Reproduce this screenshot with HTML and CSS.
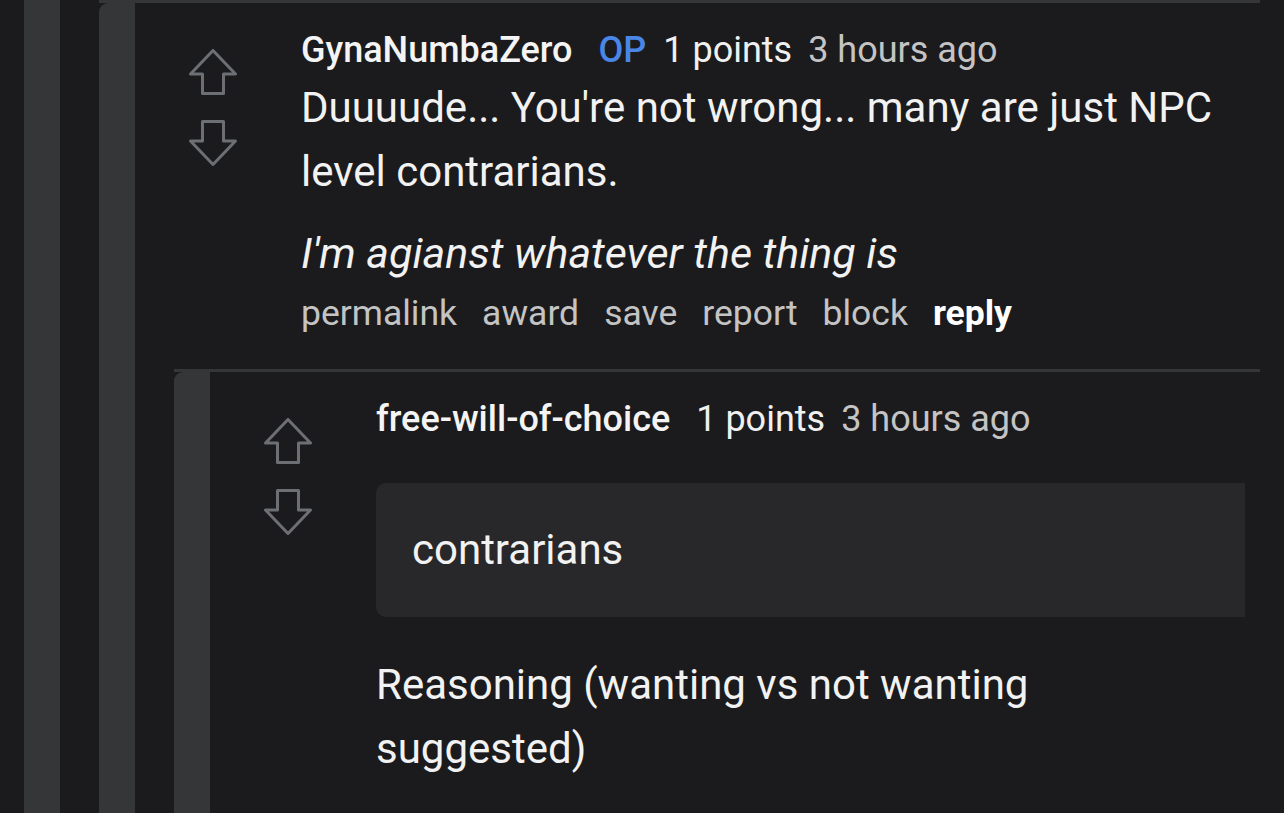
FILE: index.html
```html
<!DOCTYPE html>
<html>
<head>
<meta charset="utf-8">
<link rel="stylesheet" href="styles.css">
</head>
<body>
<div class="page">
  <div class="thread">
    <div class="bar bar-root"></div>
    <div class="replies">
      <div class="comment">
        <div class="bar"></div>
        <div class="main">
          <div class="entry">
            <div class="votes">
              <svg class="arrow" viewBox="0 0 48 46"><polygon points="24,1.5 46.5,25 34.5,25 34.5,44.5 13.5,44.5 13.5,25 1.5,25"/></svg>
              <svg class="arrow" viewBox="0 0 48 46"><polygon points="13.5,1.5 34.5,1.5 34.5,21 46.5,21 24,44.5 1.5,21 13.5,21"/></svg>
            </div>
            <div class="content">
              <div class="meta">
                <span class="author">GynaNumbaZero</span>
                <span class="op">OP</span>
                <span class="score">1 points</span>
                <span class="time">3 hours ago</span>
              </div>
              <p class="text">Duuuude... You're not wrong... many are just NPC level contrarians.</p>
              <p class="text text-gap"><em>I'm agianst whatever the thing is</em></p>
              <div class="actions">
                <span>permalink</span>
                <span>award</span>
                <span>save</span>
                <span>report</span>
                <span>block</span>
                <span class="reply">reply</span>
              </div>
            </div>
          </div>
          <div class="child">
            <div class="comment">
              <div class="bar"></div>
              <div class="main">
                <div class="entry">
                  <div class="votes">
                    <svg class="arrow" viewBox="0 0 48 46"><polygon points="24,1.5 46.5,25 34.5,25 34.5,44.5 13.5,44.5 13.5,25 1.5,25"/></svg>
                    <svg class="arrow" viewBox="0 0 48 46"><polygon points="13.5,1.5 34.5,1.5 34.5,21 46.5,21 24,44.5 1.5,21 13.5,21"/></svg>
                  </div>
                  <div class="content">
                    <div class="meta">
                      <span class="author">free-will-of-choice</span>
                      <span class="score">1 points</span>
                      <span class="time">3 hours ago</span>
                    </div>
                    <blockquote class="quote">contrarians</blockquote>
                    <p class="text text-after-quote">Reasoning (wanting vs not wanting suggested)</p>
                  </div>
                </div>
              </div>
            </div>
          </div>
        </div>
      </div>
    </div>
  </div>
</div>
</body>
</html>
```
FILE: styles.css
```css
html, body {
  margin: 0;
  padding: 0;
  height: 100%;
  overflow: hidden;
  background: #1b1b1d;
}

body {
  font-family: Roboto, "Liberation Sans", sans-serif;
  color: #f2f2f2;
}

.page {
  padding: 0 24px;
  min-height: 100%;
  display: flex;
  flex-direction: column;
}

.thread {
  display: flex;
  flex: 1;
}

.bar {
  width: 36px;
  flex: 0 0 36px;
  background: #353638;
  border-top-left-radius: 9px;
}

.bar-root {
  border-radius: 0;
}

.replies {
  flex: 1;
  padding-left: 39px;
  display: flex;
  flex-direction: column;
}

.comment {
  display: flex;
  border-top: 3px solid #353638;
  flex: 1;
}

.main {
  flex: 1;
  display: flex;
  flex-direction: column;
  min-width: 0;
}

.entry {
  display: flex;
  padding-right: 15px;
  padding-bottom: 32px;
}

.votes {
  flex: 0 0 48px;
  margin-left: 54px;
  margin-right: 64px;
  padding-top: 46px;
  display: flex;
  flex-direction: column;
  gap: 25px;
}

.arrow {
  width: 48px;
  height: 46px;
  display: block;
}

.arrow polygon {
  fill: none;
  stroke: #6c6f73;
  stroke-width: 3;
  stroke-linejoin: round;
}

.content {
  flex: 1;
  min-width: 0;
  overflow: hidden;
}

.meta {
  padding-top: 23px;
  display: flex;
  align-items: center;
  height: 48px;
  line-height: 48px;
  font-size: 36px;
  white-space: nowrap;
}

.author {
  font-weight: 500;
  color: #f4f4f4;
  margin-right: 26px;
}

.op {
  color: #4a86e8;
  font-weight: 500;
  margin-right: 17px;
}

.score {
  color: #f0f0f0;
  margin-right: 16px;
}

.time {
  color: #c4c4c4;
}

.text {
  margin: 2px 24px 0 0;
  font-size: 42px;
  line-height: 64px;
}

.text-gap {
  margin-top: 17px;
  font-size: 43px;
}

.text em {
  font-style: italic;
}

.actions {
  margin-top: 4px;
  display: flex;
  gap: 25px;
  font-size: 35.5px;
  line-height: 48px;
  color: #c4c4c4;
}

.reply {
  color: #ffffff;
  font-weight: 700;
}

.child {
  flex: 1;
  display: flex;
  flex-direction: column;
  padding-left: 39px;
}

.quote {
  margin: 40px -40px 0 0;
  background: #28282a;
  border-radius: 10px 0 0 10px;
  padding: 35px 36px;
  font-size: 42px;
  line-height: 64px;
}

.text-after-quote {
  margin-top: 36px;
}
```
